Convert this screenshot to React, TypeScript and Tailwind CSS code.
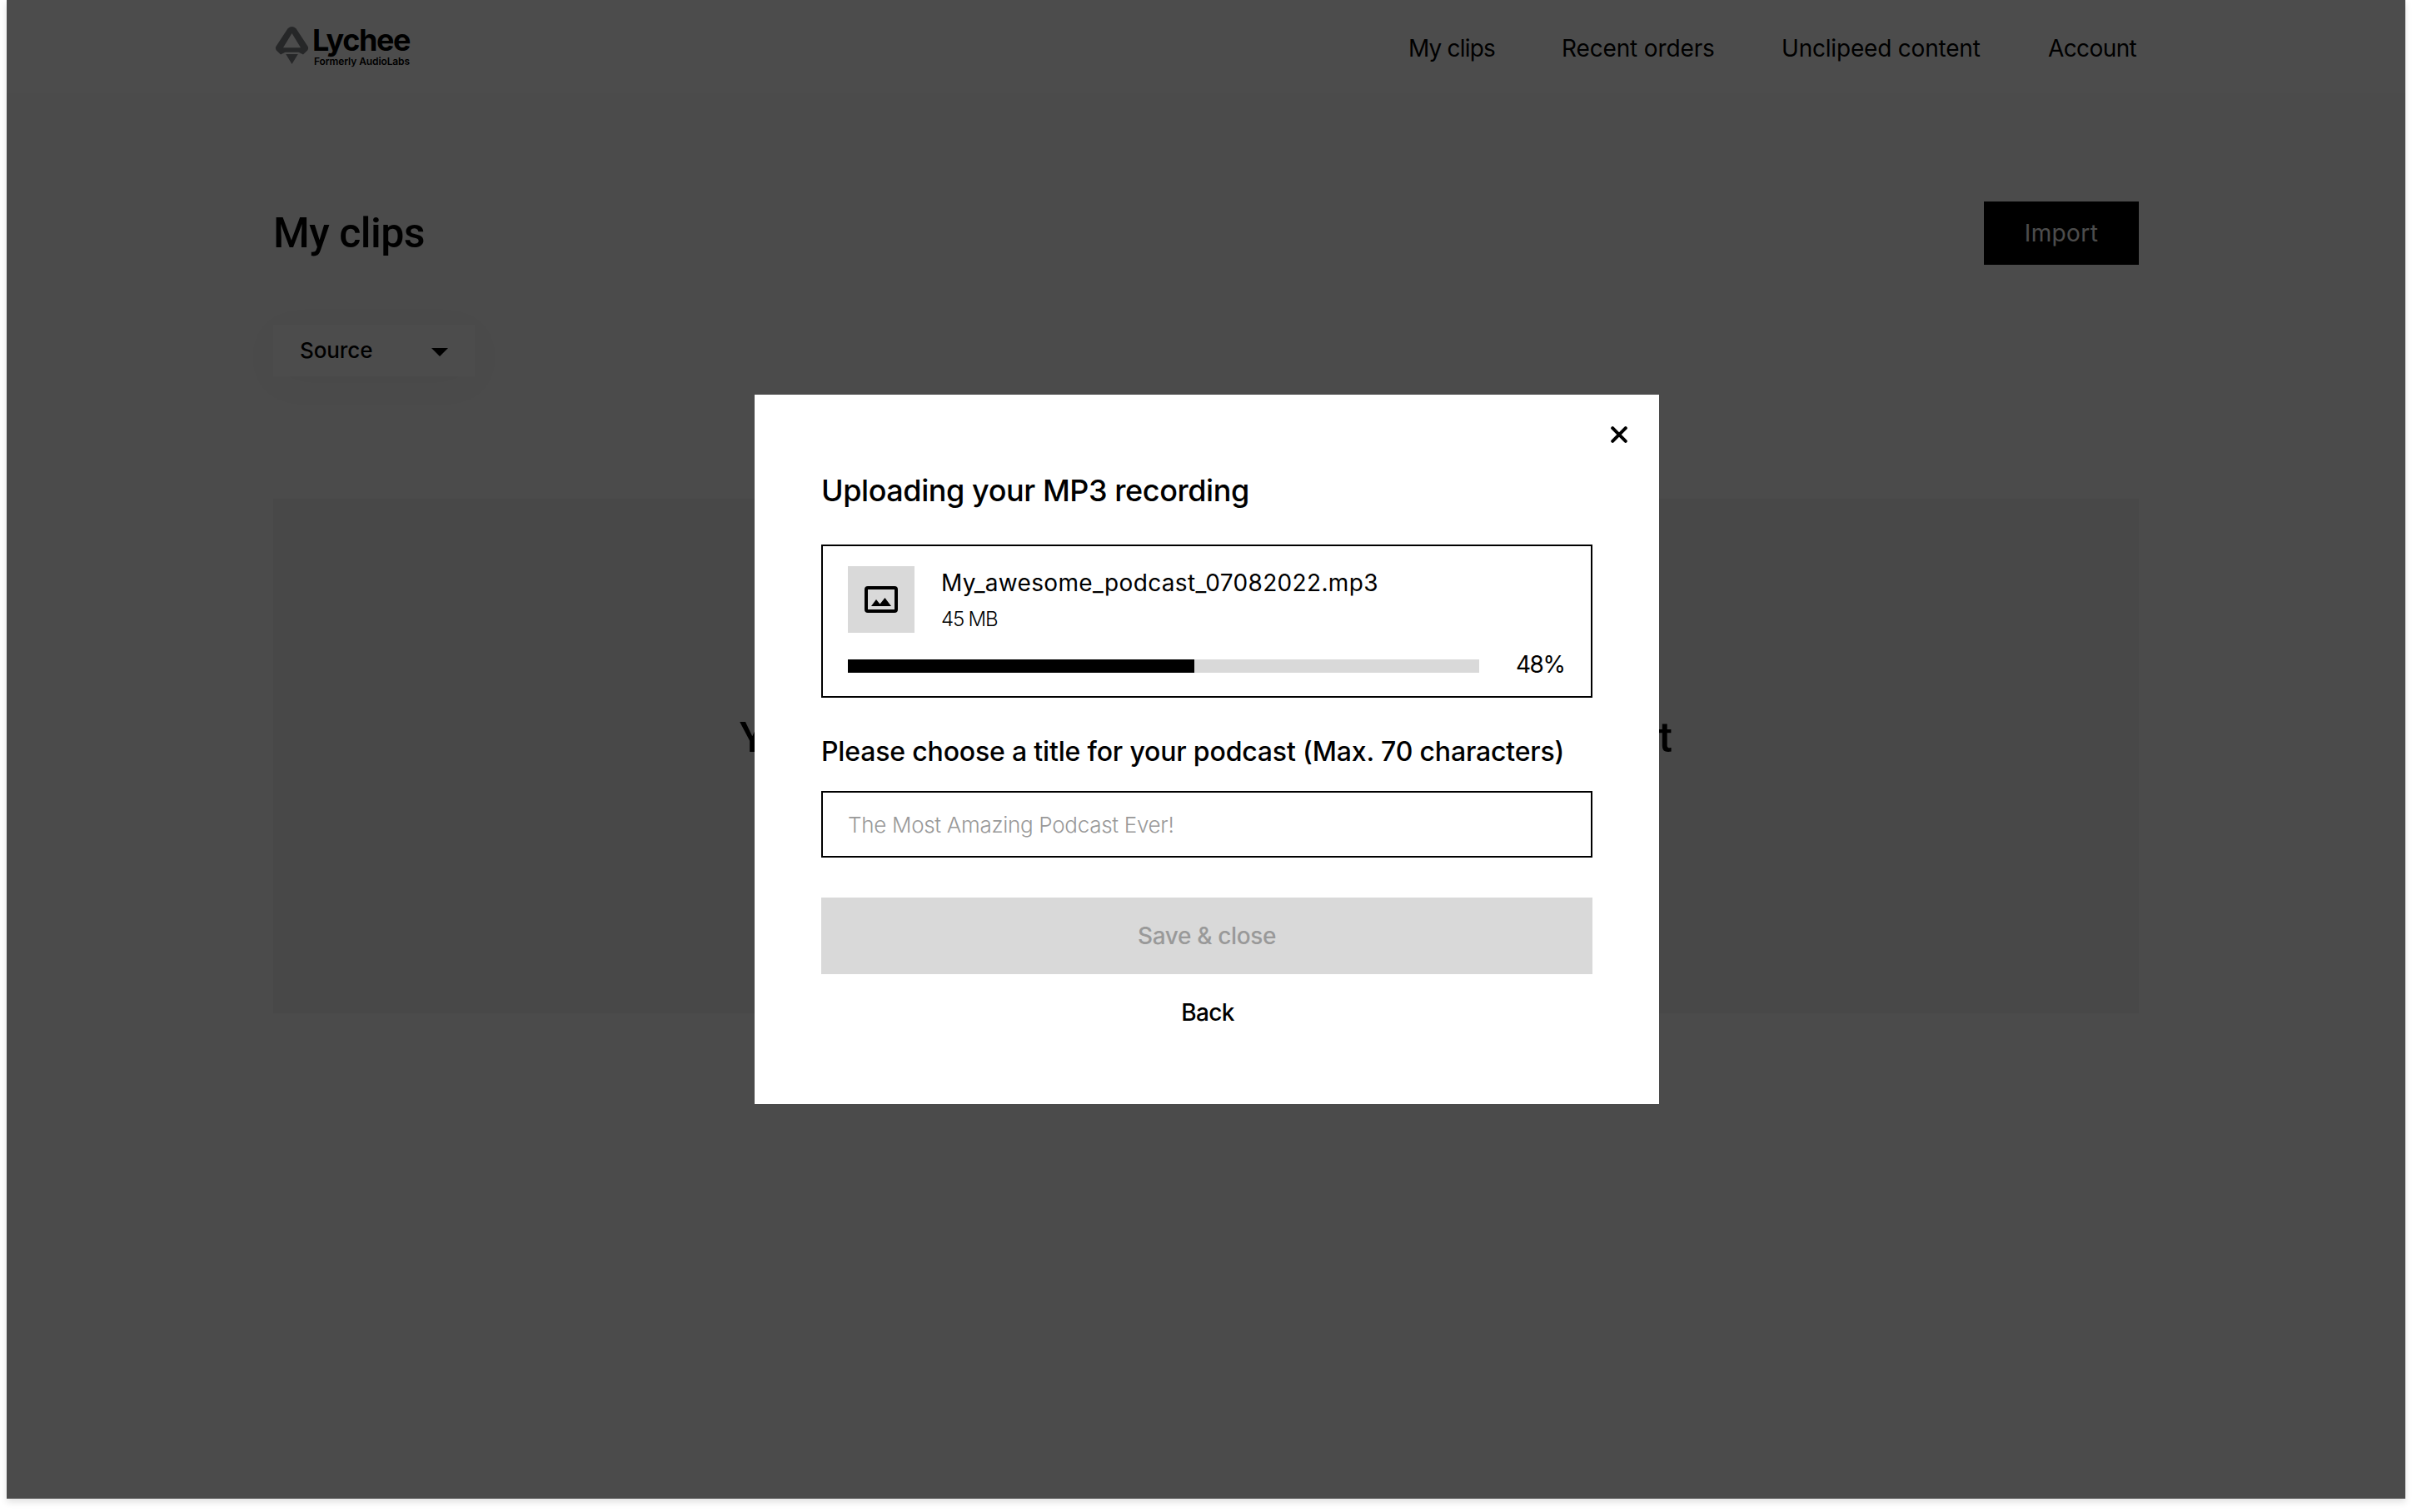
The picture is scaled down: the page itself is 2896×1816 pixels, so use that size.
import { useState } from 'react'

const links = [
    { label: 'My clips', style: 'w-[184px] tracking-[-0.82px]' },
    { label: 'Recent orders', style: 'w-[264px] tracking-[-0.14px]' },
    { label: 'Unclipeed content', style: 'w-[320px] tracking-[-0.2px]' },
    { label: 'Account', style: 'w-[109px] tracking-[-0.6px]' },
]

function Logo() {
    return (
        <div className="flex items-start pl-0.5">
            <svg className="mt-8 h-[45px] w-[41px] shrink-0" viewBox="0 0 41 45" fill="#808287">
                <path fillRule="evenodd" d="M15.5 2.2Q20.5 -2 25.5 2.2L39.6 23.8Q40.8 26.2 39.2 28.4L34 33.6L28.5 30.8H12.5L7 33.6L1.8 28.4Q0.2 26.2 1.4 23.8ZM20.5 8L10 25.2H31Z" />
                <path d="M13.2 33H27.8L20.5 45Z" />
            </svg>
            <div className="ml-1 flex flex-col pt-[30px] font-bold whitespace-nowrap">
                <span className="text-[36px] leading-[37px] tracking-[-1.4px]">Lychee</span>
                <span className="pl-0.5 text-[12px] leading-[14px] font-semibold tracking-[-0.1px]">Formerly AudioLabs</span>
            </div>
        </div>
    )
}

function Header() {
    return (
        <header className="flex h-28 justify-between bg-white px-80">
            <Logo />
            <nav className="flex items-center pt-[3px] text-[28px] leading-9 whitespace-nowrap">
                {links.map((link) => (
                    <a key={link.label} href="#" className={link.style}>{link.label}</a>
                ))}
            </nav>
        </header>
    )
}

function ClipsPage() {
    return (
        <main className="px-80">
            <div className="mt-[130px] flex h-[76px] items-center justify-between">
                <h1 className="pb-px font-['Roboto',sans-serif] text-[50px] leading-none font-medium tracking-[-0.5px]">My clips</h1>
                <button className="h-[76px] w-[186px] bg-black text-[28px] tracking-[0.41px] text-white">Import</button>
            </div>
            <button className="mt-[72px] flex h-[62px] w-[242px] items-center justify-between bg-white pr-8 pb-px pl-8 text-[26px] font-medium tracking-[-0.1px] shadow-[0_8px_48px_rgba(0,0,0,0.03)]">
                Source
                <svg className="mt-1 h-2.5 w-5" viewBox="0 0 20 10">
                    <path d="M0 0H20L10 10Z" />
                </svg>
            </button>
            <section className="mt-[147px] flex h-[618px] items-center justify-between bg-[#f0f0f0] px-[560px] pb-11 font-['Roboto',sans-serif] text-[50px] font-medium">
                <span>Y</span>
                <span>t</span>
            </section>
        </main>
    )
}

function FileCard({ name, size, progress, fill }: { name: string; size: string; progress: number; fill: number }) {
    return (
        <div className="mt-[41px] h-[184px] border-2 border-black px-[30px] pt-6">
            <div className="flex h-20">
                <div className="flex size-20 items-center justify-center bg-[#d9d9d9]">
                    <svg className="h-8 w-10" viewBox="0 0 40 32">
                        <rect x="2" y="2" width="36" height="28" rx="2" fill="none" stroke="#000" strokeWidth="4" />
                        <path d="M8 24L14 16L18.5 21.4L24.5 14L32 24Z" />
                    </svg>
                </div>
                <div className="ml-8">
                    <p className="text-[28px] leading-[41px] tracking-[0.34px]">{name}</p>
                    <p className="text-[24px] leading-[46px] font-light tracking-[-1.2px]">{size}</p>
                </div>
            </div>
            <div className="mt-8 flex h-4 items-center">
                <div className="h-4 w-[758px] bg-[#d9d9d9]">
                    <div className="h-4 bg-black" style={{ width: `${fill}px` }} />
                </div>
                <span className="-mt-1 ml-[44px] text-[28px] tracking-[-1.5px]">{progress}%</span>
            </div>
        </div>
    )
}

function UploadModal() {
    const [title, setTitle] = useState('')

    return (
        <div className="relative flex h-[852px] w-[1086px] flex-col bg-white px-20 pt-[91px]">
            <button className="absolute top-[38px] right-[38px]" aria-label="Close">
                <svg className="size-5" viewBox="0 0 20 20" stroke="#000" strokeWidth="4" strokeLinecap="round">
                    <path d="M2.2 2.2L17.8 17.8M17.8 2.2L2.2 17.8" />
                </svg>
            </button>
            <h2 className="text-[36px] leading-[48px] font-medium tracking-[-0.43px]">Uploading your MP3 recording</h2>
            <FileCard name="My_awesome_podcast_07082022.mp3" size="45 MB" progress={48} fill={416} />
            <label htmlFor="title" className="mt-10 text-[32px] leading-[49px] font-medium tracking-[-0.17px] whitespace-nowrap">
                Please choose a title for your podcast (Max. 70 characters)
            </label>
            <input
                id="title"
                maxLength={70}
                value={title}
                onChange={(e) => setTitle(e.target.value)}
                placeholder="The Most Amazing Podcast Ever!"
                className="mt-[23px] h-20 border-2 border-black pl-[30px] text-[26px] font-light tracking-[-0.3px] placeholder:text-[#999]"
            />
            <button className="mt-12 h-[92px] bg-[#d9d9d9] pb-px text-[28px] font-medium tracking-[-0.36px] text-[#999]" disabled>
                Save &amp; close
            </button>
            <button className="mt-[22px] self-center pl-0.5 text-[28px] leading-[48px] font-medium tracking-[-0.65px]">Back</button>
        </div>
    )
}

export default function App() {
    return (
        <div className="h-[1816px] overflow-hidden bg-white px-2 font-['Inter',sans-serif] text-black">
            <div className="relative flex h-[1800px] flex-col bg-[#fafafa] shadow-[0_4px_8px_rgba(0,0,0,0.12)]">
                <Header />
                <ClipsPage />
                <div className="absolute inset-0 flex items-center justify-center bg-black/70 pl-0.5">
                    <UploadModal />
                </div>
            </div>
        </div>
    )
}
